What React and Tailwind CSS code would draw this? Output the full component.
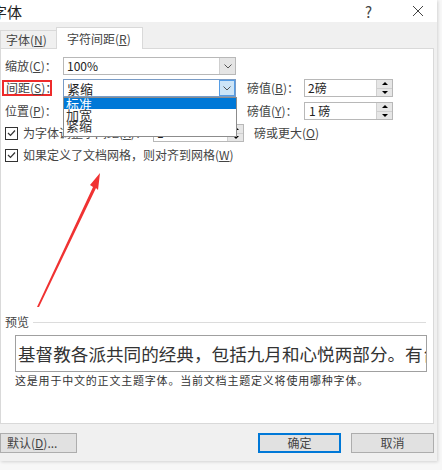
import React from 'react'

const FONT = "font-['Noto_Sans_CJK_SC','Noto_Sans_CJK_JP',sans-serif]"

function Spin() {
  return (
    <div className="w-[16px] h-full flex flex-col border-l border-[#d0d0d0]">
      <div className="flex-1 bg-[#e6e6e6] flex items-center justify-center border-b border-[#cfcfcf]">
        <div className="w-0 h-0 border-l-[3px] border-r-[3px] border-b-[3px] border-l-transparent border-r-transparent border-b-black" />
      </div>
      <div className="flex-1 bg-[#e6e6e6] flex items-center justify-center">
        <div className="w-0 h-0 border-l-[3px] border-r-[3px] border-t-[3px] border-l-transparent border-r-transparent border-t-black" />
      </div>
    </div>
  )
}

function Chevron({ focused }) {
  return (
    <div className={`w-[16px] h-full flex items-center justify-center ${focused ? 'bg-[#cce4f7] border border-[#569de5]' : 'bg-[#e5e5e5] border-l border-[#cfcfcf]'}`}>
      <svg width="8" height="5" viewBox="0 0 8 5">
        <path d="M0.5 0.5 L4 4 L7.5 0.5" fill="none" stroke="#555" strokeWidth="1" />
      </svg>
    </div>
  )
}

function Checkbox() {
  return (
    <div className="w-[13px] h-[13px] border border-[#333] bg-white flex items-center justify-center shrink-0">
      <svg width="9" height="8" viewBox="0 0 9 8">
        <path d="M1 4 L3.5 6.5 L8 1.5" fill="none" stroke="#333" strokeWidth="1.2" />
      </svg>
    </div>
  )
}

export default function App() {
  return (
    <div className={`w-[442px] h-[470px] bg-[#f7f7f7] overflow-hidden ${FONT} text-[#333]`}>
      <div className="w-[437px] h-[461px] bg-[#f0f0f0] relative shadow-[1px_1px_3px_rgba(0,0,0,0.15)]">
        {/* title bar */}
        <div className="h-[22px] bg-white flex items-center">
          <span className="text-[15px] leading-none text-[#222] ml-[-8px] whitespace-nowrap">字体</span>
          <div className="flex-1" />
          <span className="text-[15px] leading-none text-[#444] mr-[40px]">?</span>
          <svg width="12" height="12" viewBox="0 0 12 12" className="mr-[13px]">
            <path d="M1 1 L11 11 M11 1 L1 11" stroke="#444" strokeWidth="1" />
          </svg>
        </div>

        {/* tabs */}
        <div className="h-[26px] flex items-end">
          <div className="h-[18px] w-[56px] border-t border-l border-[#d9d9d9] flex items-center pl-[5px] text-[12px] leading-none text-[#444] whitespace-nowrap">
            字体(<u>N</u>)
          </div>
          <div className="h-[22px] w-[87px] bg-white border-t border-l border-r border-[#d9d9d9] flex items-center pl-[10px] text-[12px] leading-none text-[#444] mb-[-1px] relative z-10 whitespace-nowrap">
            字符间距(<u>R</u>)
          </div>
        </div>

        {/* panel */}
        <div className="w-[434px] h-[376px] bg-white border border-[#d9d9d9] relative text-[12px] leading-none text-[#444] whitespace-nowrap">
          {/* scale row */}
          <div className="flex items-center h-[18px] mt-[8px]">
            <div className="w-[62px] pl-[4px]">缩放(<u>C</u>)：</div>
            <div className="w-[173px] h-full border border-[#b8b8b8] flex items-center">
              <span className="flex-1 pl-[3px] text-[#222]">100%</span>
              <Chevron />
            </div>
          </div>

          {/* spacing row */}
          <div className="flex items-center h-[18px] mt-[4px]">
            <div className="w-[62px] pl-[1px]">
              <div className="w-[50px] h-[16px] border-2 border-[#ee2b2b] flex items-center pl-[2px]">间距(<u>S</u>)：</div>
            </div>
            <div className="w-[173px] h-full border border-[#7a9cc6] flex items-center">
              <span className="flex-1 pl-[3px] text-[13px] text-[#222]">紧缩</span>
              <Chevron focused />
            </div>
            <div className="w-[57px] ml-[11px]">磅值(<u>B</u>)：</div>
            <div className="w-[89px] h-full border border-[#b8b8b8] flex items-center">
              <span className="flex-1 pl-[3px] text-[#222]">2磅</span>
              <Spin />
            </div>
          </div>

          {/* position row */}
          <div className="flex items-center h-[18px] mt-[5px]">
            <div className="w-[62px] pl-[4px]">位置(<u>P</u>)：</div>
            <div className="w-[173px] h-full" />
            <div className="w-[57px] ml-[11px]">磅值(<u>Y</u>)：</div>
            <div className="w-[89px] h-full border border-[#b8b8b8] flex items-center">
              <span className="flex-1 pl-[4px] text-[#222]">1 磅</span>
              <Spin />
            </div>
          </div>

          {/* kerning row */}
          <div className="flex items-center h-[18px] mt-[4px]">
            <div className="w-[152px] pl-[4px] flex items-center gap-[5px]">
              <Checkbox />
              <span>为字体调整字间距(<u>K</u>)：</span>
            </div>
            <div className="w-[91px] h-full border border-[#b8b8b8] flex items-center">
              <span className="flex-1 pl-[3px] text-[#222]">1</span>
              <Spin />
            </div>
            <div className="ml-[10px]">磅或更大(<u>O</u>)</div>
          </div>

          {/* grid row */}
          <div className="flex items-center h-[16px] mt-[5px] pl-[4px] gap-[5px]">
            <Checkbox />
            <span>如果定义了文档网格，则对齐到网格(<u>W</u>)</span>
          </div>

          {/* dropdown list overlay */}
          <div className="absolute left-[62px] top-[48px] w-[174px] h-[40px] bg-white border border-[#8c8c8c] text-[13px] leading-[11px] text-[#333] z-20">
            <div className="bg-[#0078d7] text-white h-[11px] pl-[2px]">标准</div>
            <div className="h-[11px] pl-[2px]">加宽</div>
            <div className="h-[11px] pl-[2px]">紧缩</div>
          </div>

          {/* preview */}
          <div className="flex items-center mt-[153px] h-[12px]">
            <span className="pl-[4px] text-[12px]">预览</span>
            <div className="flex-1 h-px bg-[#dcdcdc] ml-[4px] mr-[7px]" />
          </div>
          <div className="ml-[14px] mt-[7px] w-[412px] h-[37px] border border-[#a0a0a0] overflow-hidden flex items-center pl-[2px] text-[17.6px] leading-none text-[#333]">
            基督教各派共同的经典，包括九月和心悦两部分。有台湾
          </div>
          <div className="ml-[14px] mt-[3px] text-[11px] tracking-[0.8px] text-[#333]">
            这是用于中文的正文主题字体。当前文档主题定义将使用哪种字体。
          </div>

          {/* red arrow annotation */}
          <svg className="absolute left-0 top-0 z-30" width="434" height="376" viewBox="0 0 434 376">
            <polygon points="36,258 92,138 89,136 99,124 97,141 95,139 38,258" fill="#f03232" />
          </svg>
        </div>

        {/* buttons */}
        <div className="flex items-center h-[20px] mt-[9px] text-[12px] leading-none text-[#444] whitespace-nowrap">
          <div className="w-[77px] h-full bg-[#e1e1e1] border border-[#adadad] flex items-center pl-[6px]">
            默认(<u>D</u>)...
          </div>
          <div className="flex-1" />
          <div className="w-[83px] h-full bg-[#e1e1e1] border-2 border-[#0078d7] flex items-center justify-center">确定</div>
          <div className="w-[83px] h-full bg-[#e1e1e1] border border-[#adadad] flex items-center justify-center ml-[10px] mr-[3px]">取消</div>
        </div>
      </div>
    </div>
  )
}
